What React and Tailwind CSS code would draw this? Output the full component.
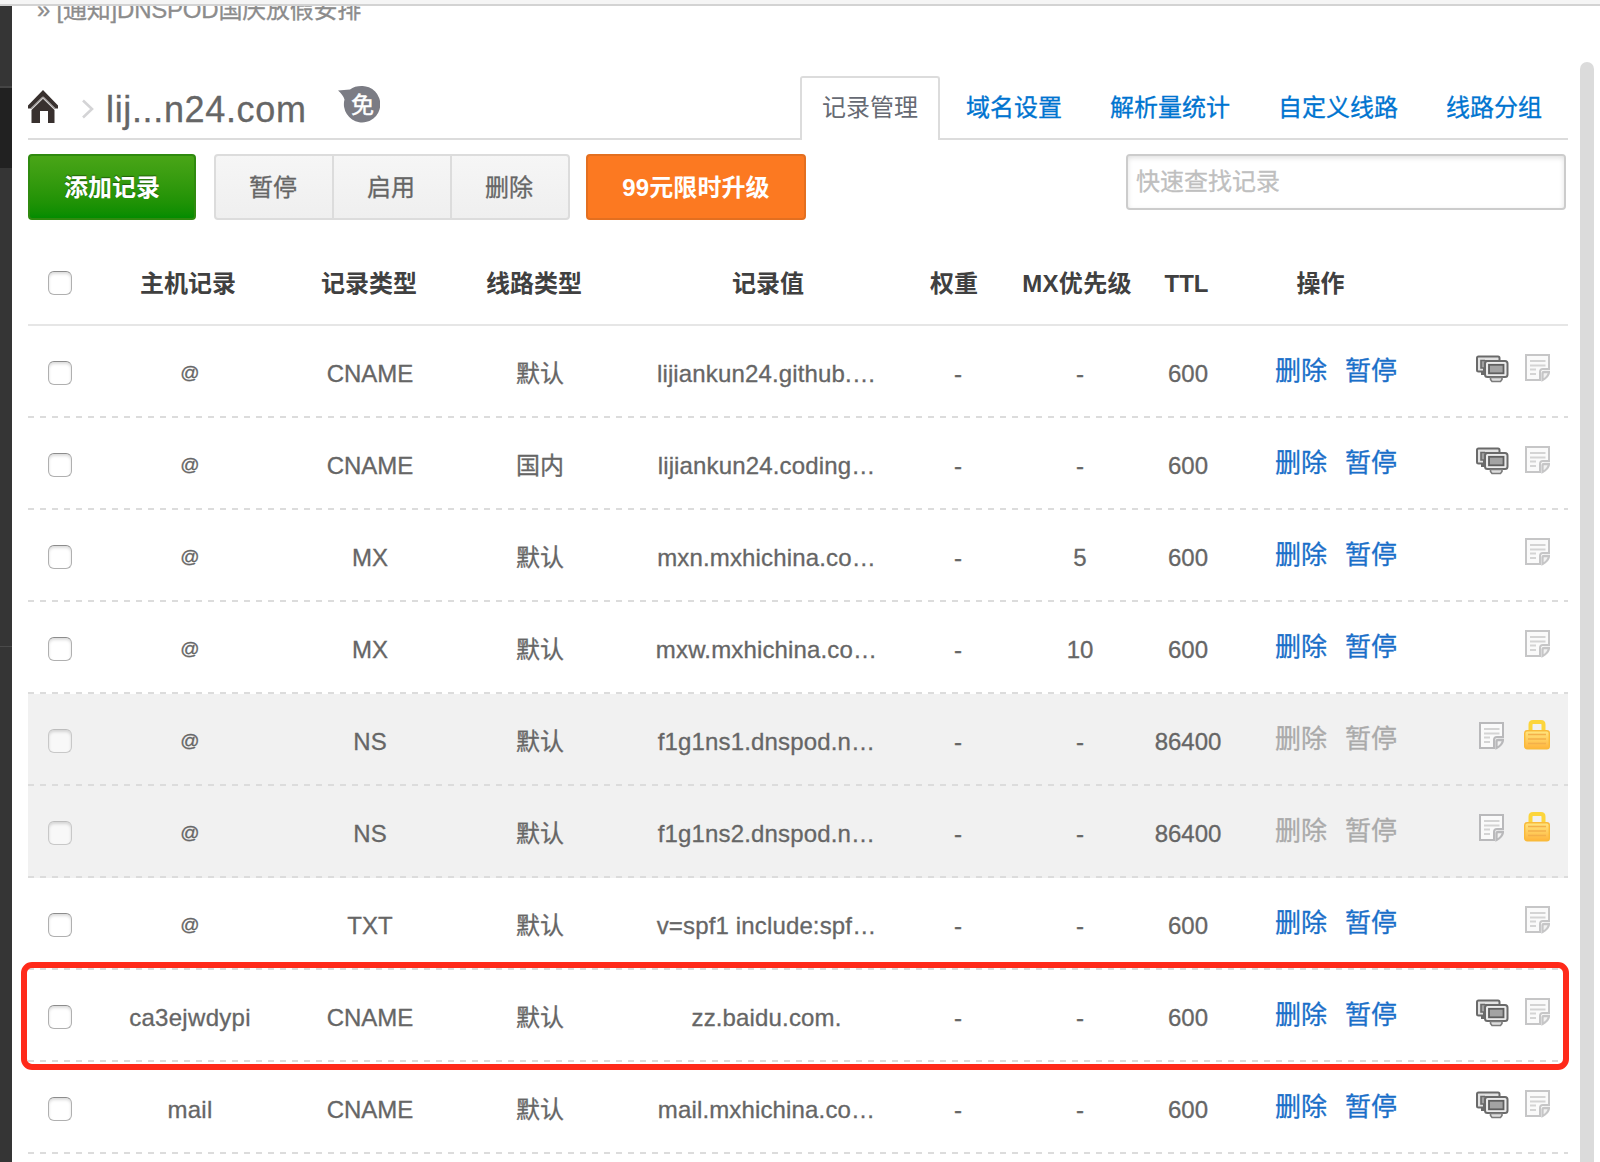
import React from 'react';

const SANS = 'font-["Liberation_Sans","Noto_Sans_CJK_SC",sans-serif]';

function HomeIcon() {
  return (
    <svg width="31" height="34" viewBox="0 0 31 34" className="shrink-0">
      <path d="M15 0L30 15.5V18.500H27L15 6.8L3 18.500H0V15.5Z" fill="#38302e" />
      <path d="M15 7L27 18.800M15 7L3 18.800" stroke="#a5a09f" strokeWidth="1.600" fill="none" />
      <path d="M15 8.8L26.500 20V33H20V21H12V33H3.500V20Z" fill="#38302e" />
    </svg>
  );
}

function FreeBadge() {
  return (
    <div className="relative h-[38px] w-[42px] shrink-0">
      <svg width="42" height="38" viewBox="0 0 42 38" className="block">
        <path d="M0 4.5L12 3.5C15 1 19 0 23.5 0A18.2 18.2 0 1 1 6.5 13.5C5.5 10 3 7 0 4.5Z" fill="#7b7c84" />
      </svg>
      <span className="absolute left-[13px] top-[7px] text-[23px] leading-[24px] text-white [-webkit-text-stroke:0.5px]">免</span>
    </div>
  );
}

function Monitors() {
  return (
    <svg width="33" height="28" viewBox="1 0 33 28" className="shrink-0">
      <path d="M2 3Q2 1.500 3.500 1.500H23Q24.500 1.500 24.500 3V6H11Q9 6 9 8V19H7V16.500H3.500Q2 16.500 2 15Z" fill="#e2e2e2" stroke="#6a6a6a" strokeWidth="2" />
      <path d="M10 5.500H6V13H9" fill="#a0a0a0" stroke="#6a6a6a" strokeWidth="1.600" />
      <rect x="10" y="6" width="22.500" height="16" rx="2.500" fill="#ececec" stroke="#6a6a6a" strokeWidth="2" />
      <rect x="14" y="9.800" width="14.500" height="8.500" fill="#a3a3a3" stroke="#5f5f5f" strokeWidth="1.800" />
      <path d="M15.500 22.500V24.500L17 26.500H25.500L27 24.500V22.500Z" fill="#dedede" stroke="#7b7b7b" strokeWidth="1.600" />
    </svg>
  );
}

function Note({ dark }) {
  const line = dark ? '#b9b9bb' : '#c6c6c7';
  return (
    <svg width="25" height="28" viewBox="0 0 25 28" className="shrink-0">
      <path d="M1 1H24V15H18Q15 15 15 18V26H1Z" fill="#fafafa" stroke={line} strokeWidth="2" />
      <path d="M5 7H20.500M5 11.500H20.500M5 15.500H11M5 20H11" stroke="#d4d4d4" strokeWidth="1.800" fill="none" />
      <path d="M17.500 26V19.500Q17.500 18 19 18H24Q23.500 23 17.500 26Z" fill="#f2f2f2" stroke={line} strokeWidth="2.300" />
    </svg>
  );
}

function Lock() {
  return (
    <svg width="26" height="30" viewBox="0 0 26 30" className="shrink-0">
      <defs>
        <linearGradient id="lockBody" x1="0" y1="0" x2="0" y2="1">
          <stop offset="0" stopColor="#ffe680" />
          <stop offset="1" stopColor="#ffb53c" />
        </linearGradient>
      </defs>
      <path d="M6.500 12V4.500Q6.500 2 9 2H17Q19.500 2 19.500 4.500V12" fill="none" stroke="#fcd53c" strokeWidth="4" />
      <rect x=".7" y="10.700" width="24.600" height="18" rx="2.500" fill="url(#lockBody)" stroke="#f9ba3a" strokeWidth="1.400" />
      <path d="M4 14.500H22M4 19H22M4 23.500H22" stroke="#f3b04a" strokeWidth="1.500" />
    </svg>
  );
}

function Checkbox({ dim }) {
  return (
    <span
      className={
        'block size-6 shrink-0 rounded-[6px] border shadow-[inset_0_2px_3px_rgba(0,0,0,0.14)] ' +
        (dim ? 'border-[#c8c8c8] border-t-[#bdbdbd] bg-[#f8f8f8]' : 'border-[#b0b0b0] border-t-[#8c8c8c] bg-white')
      }
    />
  );
}

const rows = [
  { host: '@', type: 'CNAME', line: '默认', value: 'lijiankun24.github.…', mx: '-', ttl: '600', multi: true },
  { host: '@', type: 'CNAME', line: '国内', value: 'lijiankun24.coding…', mx: '-', ttl: '600', multi: true },
  { host: '@', type: 'MX', line: '默认', value: 'mxn.mxhichina.co…', mx: '5', ttl: '600' },
  { host: '@', type: 'MX', line: '默认', value: 'mxw.mxhichina.co…', mx: '10', ttl: '600' },
  { host: '@', type: 'NS', line: '默认', value: 'f1g1ns1.dnspod.n…', mx: '-', ttl: '86400', locked: true },
  { host: '@', type: 'NS', line: '默认', value: 'f1g1ns2.dnspod.n…', mx: '-', ttl: '86400', locked: true },
  { host: '@', type: 'TXT', line: '默认', value: 'v=spf1 include:spf…', mx: '-', ttl: '600' },
  { host: 'ca3ejwdypi', type: 'CNAME', line: '默认', value: 'zz.baidu.com.', mx: '-', ttl: '600', multi: true, marked: true },
  { host: 'mail', type: 'CNAME', line: '默认', value: 'mail.mxhichina.co…', mx: '-', ttl: '600', multi: true },
];

function Cell({ children, className = '' }) {
  return <div className={'flex justify-center whitespace-nowrap pt-0.5 ' + className}>{children}</div>;
}

function Row({ r }) {
  return (
    <div className={'relative h-[92px] shrink-0 ' + (r.locked ? 'bg-[#f1f1f1]' : '')}>
      <div className="grid h-[90px] grid-cols-[72px_180px_180px_160px_290px_96px_148px_68px_346px] items-center pt-1 text-[24px] leading-[28px] text-[#666] [-webkit-text-stroke:0.3px]">
        <div className="pl-5"><Checkbox dim={r.locked} /></div>
        <Cell className={r.host === '@' ? '-mt-[3px] text-[19px]' : 'tracking-[0.3px]'}>{r.host}</Cell>
        <Cell>{r.type}</Cell>
        <Cell>{r.line}</Cell>
        <Cell className="pl-[3px] tracking-[0.15px]">{r.value}</Cell>
        <Cell>-</Cell>
        <Cell>{r.mx}</Cell>
        <Cell>{r.ttl}</Cell>
        <div className="flex items-center justify-between pr-[18px] pl-[53px]">
          <div className={'flex gap-[18px] pb-1 text-[26px] ' + (r.locked ? 'text-[#aaa]' : 'text-[#1a6fc9]')}>
            <a>删除</a>
            <a>暂停</a>
          </div>
          <div className={'flex items-center pb-[11px] ' + (r.locked ? 'gap-5' : 'gap-4')}>
            {r.multi && <span className="mt-0.5"><Monitors /></span>}
            <Note dark={r.locked} />
            {r.locked && <span className="-mt-0.5"><Lock /></span>}
          </div>
        </div>
      </div>
      <div className="h-[2px] bg-[repeating-linear-gradient(90deg,#dcdcdc_0px,#dcdcdc_6px,transparent_6px,transparent_12px)]" />
      {r.marked && (
        <div className="absolute -top-[8.5px] -right-px -left-[7.5px] z-10 h-[108px] rounded-[11px] border-[6px] border-[#ff2a1a]" />
      )}
    </div>
  );
}

export default function App() {
  return (
    <div className={'flex h-[1162px] w-[1600px] flex-col overflow-hidden bg-white ' + SANS}>
      <div className="relative z-10 h-[6px] shrink-0 border-b-2 border-[#d3d3d3] bg-[#f5f5f5]" />
      <div className="flex min-h-0 flex-1">
        <div className="flex w-3 shrink-0 flex-col bg-[#353535]">
          <div className="h-[82px] border-b-2 border-[#454545]" />
          <div className="h-20 bg-[#212121]" />
          <div className="h-[479px] border-b border-[#4a4a4a]" />
        </div>

        <div className="ml-4 flex w-[1540px] shrink-0 flex-col">
          <div className="flex h-[70px] shrink-0 items-start">
            <p className="-mt-[11px] ml-[9px] whitespace-nowrap text-[24px] leading-[30px] tracking-[-0.22px] text-[#8c8c8c] [-webkit-text-stroke:0.3px]">» [通知]DNSPOD国庆放假安排</p>
          </div>

          <div className="flex h-16 shrink-0">
            <div className="flex w-[772px] border-b-2 border-[#dcdcdc]">
              <div className="mt-[14px]"><HomeIcon /></div>
              <svg width="14" height="20" viewBox="0 0 14 20" className="mt-[23px] ml-[22px]">
                <path d="M2 1.500L11 10L2 18.500" fill="none" stroke="#d4d4d6" strokeWidth="2.600" />
              </svg>
              <h1 className="mt-[13px] ml-[11px] w-[232px] whitespace-nowrap text-[36px] leading-[42px] tracking-[0.65px] text-[#666] [-webkit-text-stroke:0.3px]">lij...n24.com</h1>
              <div className="mt-[10px]"><FreeBadge /></div>
            </div>
            <div className="flex w-[140px] justify-center rounded-t-[3px] border-x-2 border-t-2 border-[#dcdcdc] pt-[12px] text-[24px] leading-[36px] text-[#666a73]">记录管理</div>
            <div className="flex flex-1 border-b-2 border-[#dcdcdc] pt-[14px] pl-[26px] text-[24px] leading-[36px] text-[#0074d0] [-webkit-text-stroke:0.3px]">
              <a className="w-[144px]">域名设置</a>
              <a className="w-[168px]">解析量统计</a>
              <a className="w-[168px]">自定义线路</a>
              <a>线路分组</a>
            </div>
          </div>

          <div className="mt-[14px] flex h-[66px] shrink-0 items-start text-[24px] leading-[30px]">
            <button className="h-[66px] w-[168px] rounded-[4px] border-2 border-[#2f8a0f] bg-gradient-to-b from-[#49a517] to-[#028c00] pt-0.5 font-bold text-white [text-shadow:0_-1px_1px_rgba(0,0,0,0.4)]">添加记录</button>
            <div className="ml-[18px] flex h-[66px] w-[356px] rounded-[4px] border-2 border-[#dcdcdc] bg-gradient-to-b from-[#f6f6f6] to-[#efefef] text-[#666] [-webkit-text-stroke:0.3px] [text-shadow:0_2px_0_#fff]">
              <button className="w-[118px] border-r-2 border-[#dcdcdc] pt-0.5 pr-0.5">暂停</button>
              <button className="w-[118px] border-r-2 border-[#dcdcdc] pt-0.5 pr-0.5">启用</button>
              <button className="flex-1 pt-0.5 pr-0.5">删除</button>
            </div>
            <button className="ml-4 h-[66px] w-[220px] rounded-[4px] border-2 border-[#e36f20] bg-[#fc7921] pt-0.5 font-bold tracking-[0.1px] text-white">99元限时升级</button>
            <div className="ml-80 h-[56px] w-[440px] rounded-[4px] border-2 border-[#ccc] pt-[11px] pl-[8px] text-[#bfbfbf] shadow-[inset_0_2px_5px_rgba(0,0,0,0.12)] [-webkit-text-stroke:0.3px]">快速查找记录</div>
          </div>

          <div className="grid h-[106px] shrink-0 grid-cols-[44px_232px_130px_200px_268px_104px_142px_76px_192px] items-center border-b-2 border-[#e6e6e6] pt-[22px] text-[24px] leading-[28px] font-bold text-[#404040]">
            <div className="pl-5"><Checkbox /></div>
            <Cell>主机记录</Cell>
            <Cell>记录类型</Cell>
            <Cell>线路类型</Cell>
            <Cell>记录值</Cell>
            <Cell>权重</Cell>
            <Cell className="tracking-[0.3px]">MX优先级</Cell>
            <Cell className="pl-px">TTL</Cell>
            <Cell className="pl-px">操作</Cell>
          </div>

          {rows.map((r, i) => (
            <Row key={i} r={r} />
          ))}
        </div>

        <div className="mt-14 ml-3 w-[14px] shrink-0 rounded-t-[7px] bg-[#dbdbdb]" />
      </div>
    </div>
  );
}
